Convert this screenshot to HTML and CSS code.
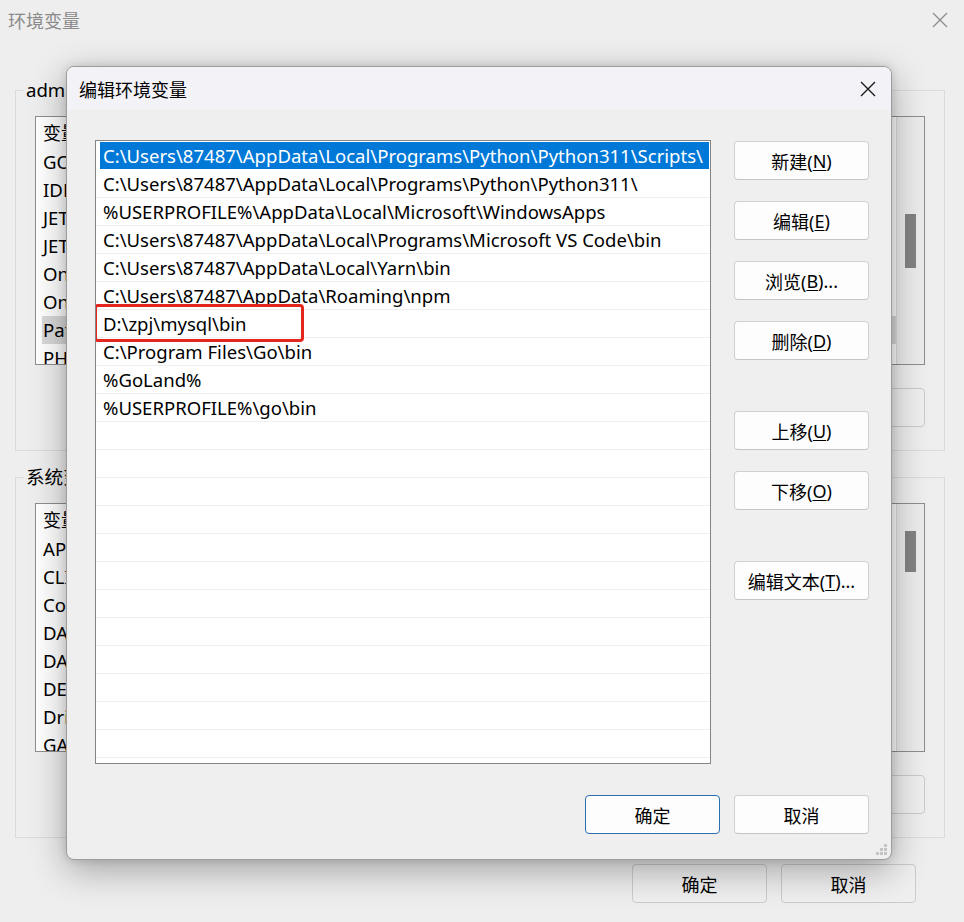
FILE: index.html
```html
<!DOCTYPE html>
<html lang="zh-CN">
<head>
<meta charset="utf-8">
<title>编辑环境变量</title>
<link rel="stylesheet" href="styles.css">
</head>
<body>
<div class="win">
  <div class="win-title">
    <span class="win-title-text">环境变量</span>
    <svg class="win-close" width="16" height="16" viewBox="0 0 16 16"><path d="M1 1L15 15M15 1L1 15" stroke="#8c8c8c" stroke-width="1.3" fill="none"/></svg>
  </div>

  <div class="group">
    <div class="group-label">admin 的用户变量(<u>U</u>)</div>
    <div class="bg-list">
      <div class="bg-list-body">
        <div class="bg-head">变量</div>
        <div class="bg-row">GOPATH</div>
        <div class="bg-row">IDEA_VM_OPTIONS</div>
        <div class="bg-row">JETBRAINSCLIENT_VM_OPTIONS</div>
        <div class="bg-row">JETBRAINS_CLIENT_VM_OPTIONS</div>
        <div class="bg-row">OneDrive</div>
        <div class="bg-row">OneDriveConsumer</div>
        <div class="bg-row bg-row-sel">Path</div>
        <div class="bg-row">PHPSTORM_VM_OPTIONS</div>
      </div>
      <div class="bg-scroll"><div class="bg-thumb thumb-1"></div></div>
    </div>
    <div class="group-actions"><div class="bg-btn">删除(<u>L</u>)</div></div>
  </div>

  <div class="group group-2">
    <div class="group-label">系统变量(<u>S</u>)</div>
    <div class="bg-list">
      <div class="bg-list-body">
        <div class="bg-head">变量</div>
        <div class="bg-row">APPDATA</div>
        <div class="bg-row">CLION_VM_OPTIONS</div>
        <div class="bg-row">ComSpec</div>
        <div class="bg-row">DATAGRIP_VM_OPTIONS</div>
        <div class="bg-row">DATASPELL_VM_OPTIONS</div>
        <div class="bg-row">DEVECOSTUDIO_VM_OPTIONS</div>
        <div class="bg-row">DriverData</div>
        <div class="bg-row">GATEWAY_VM_OPTIONS</div>
      </div>
      <div class="bg-scroll"><div class="bg-thumb thumb-2"></div></div>
    </div>
    <div class="group-actions"><div class="bg-btn">删除(<u>E</u>)</div></div>
  </div>

  <div class="win-footer">
    <div class="bg-btn">确定</div>
    <div class="bg-btn">取消</div>
  </div>

  <div class="dialog">
    <div class="dlg-title">
      <span class="dlg-title-text">编辑环境变量</span>
      <svg class="dlg-close" width="18" height="18" viewBox="0 0 18 18"><path d="M2 2L16 16M16 2L2 16" stroke="#1a1a1a" stroke-width="1.4" fill="none"/></svg>
    </div>
    <div class="dlg-body">
      <div class="dlg-main">
        <div class="path-list">
          <div class="row row-sel"><span>C:\Users\87487\AppData\Local\Programs\Python\Python311\Scripts\</span></div>
          <div class="row"><span>C:\Users\87487\AppData\Local\Programs\Python\Python311\</span></div>
          <div class="row"><span>%USERPROFILE%\AppData\Local\Microsoft\WindowsApps</span></div>
          <div class="row"><span>C:\Users\87487\AppData\Local\Programs\Microsoft VS Code\bin</span></div>
          <div class="row"><span>C:\Users\87487\AppData\Local\Yarn\bin</span></div>
          <div class="row"><span>C:\Users\87487\AppData\Roaming\npm</span></div>
          <div class="row"><span>D:\zpj\mysql\bin</span></div>
          <div class="row"><span>C:\Program Files\Go\bin</span></div>
          <div class="row"><span>%GoLand%</span></div>
          <div class="row"><span>%USERPROFILE%\go\bin</span></div>
          <div class="row"></div><div class="row"></div><div class="row"></div><div class="row"></div>
          <div class="row"></div><div class="row"></div><div class="row"></div><div class="row"></div>
          <div class="row"></div><div class="row"></div><div class="row"></div><div class="row"></div>
          <div class="mark"></div>
        </div>
        <div class="side-btns">
          <div class="btn">新建(<u>N</u>)</div>
          <div class="btn">编辑(<u>E</u>)</div>
          <div class="btn">浏览(<u>B</u>)...</div>
          <div class="btn">删除(<u>D</u>)</div>
          <div class="btn btn-sep">上移(<u>U</u>)</div>
          <div class="btn">下移(<u>O</u>)</div>
          <div class="btn btn-sep">编辑文本(<u>T</u>)...</div>
        </div>
      </div>
      <div class="dlg-footer">
        <div class="btn btn-default">确定</div>
        <div class="btn">取消</div>
      </div>
    </div>
    <svg class="grip" width="12" height="12" viewBox="0 0 12 12">
      <rect x="8" y="0" width="3" height="3" fill="#c4c4c4"/>
      <rect x="4" y="4" width="3" height="3" fill="#c4c4c4"/>
      <rect x="8" y="4" width="3" height="3" fill="#c4c4c4"/>
      <rect x="0" y="8" width="3" height="3" fill="#c4c4c4"/>
      <rect x="4" y="8" width="3" height="3" fill="#c4c4c4"/>
      <rect x="8" y="8" width="3" height="3" fill="#c4c4c4"/>
    </svg>
  </div>
</div>
</body>
</html>
```

FILE: styles.css
```css
* { box-sizing: border-box; }
html, body { margin: 0; padding: 0; }
body {
  width: 964px;
  height: 922px;
  overflow: hidden;
  background: #eeeeee;
  font-family: "Noto Sans", "Noto Sans CJK SC", sans-serif;
  font-size: 18px;
  color: #000;
}
u { text-decoration: underline; text-underline-offset: 2px; text-decoration-thickness: 1px; }

.win { position: relative; width: 964px; height: 922px; }
.win-title {
  height: 40px;
  display: flex;
  align-items: center;
  justify-content: space-between;
  padding: 0 16px 0 8px;
  color: #8a8a8a;
}
.win-title-text { font-family: "Noto Sans CJK SC", sans-serif; }

.group {
  margin: 50px 19px 0 15px;
  height: 361px;
  border: 1px solid #dadada;
  padding: 0 19px;
}
.group-2 { margin-top: 26px; }
.group-label {
  display: block;
  width: fit-content;
  height: 24px;
  line-height: 24px;
  margin: -13px 0 0 -11px;
  padding: 0 2px;
  background: #eeeeee;
  white-space: nowrap;
  font-size: 18.6px;
}
.bg-list {
  margin-top: 14px;
  height: 249px;
  border: 1px solid #8e8e8e;
  background: #fff;
  display: flex;
  overflow: hidden;
}
.bg-list-body { flex: 1; padding-left: 6px; font-size: 18.6px; }
.bg-head { height: 31px; line-height: 30px; padding-left: 1px; font-family: "Noto Sans CJK SC", sans-serif; font-size: 18px; }
.bg-row { height: 28px; line-height: 28px; padding-left: 1px; white-space: nowrap; }
.bg-row-sel { background: #d9d9d9; }
.bg-scroll {
  width: 28px;
  background: #ececec;
  border-left: 1px solid #dedede;
}
.bg-thumb { width: 11px; margin-left: 8px; background: #838383; }
.thumb-1 { margin-top: 97px; height: 54px; }
.thumb-2 { margin-top: 27px; height: 41px; }
.group-actions { display: flex; justify-content: flex-end; margin-top: 23px; }
.bg-btn {
  width: 135px;
  height: 39px;
  border: 1px solid #cbcbcb;
  border-radius: 4px;
  background: #efefef;
  display: flex;
  align-items: center;
  justify-content: center;
}
.win-footer {
  display: flex;
  justify-content: flex-end;
  gap: 14px;
  margin: 26px 48px 0 0;
}

/* dialog overlay */
.dialog {
  position: absolute;
  left: 66px;
  top: 66px;
  width: 826px;
  height: 794px;
  border: 1px solid #9c9c9c;
  border-radius: 8px;
  background: #efefef;
  box-shadow: 0 10px 36px rgba(0, 0, 0, 0.32), 0 0 10px rgba(0,0,0,0.12);
  overflow: hidden;
}
.dlg-title {
  height: 43px;
  background: #f3f3f7;
  display: flex;
  align-items: center;
  justify-content: space-between;
  padding: 0 14px 0 12px;
}
.dlg-title-text { font-family: "Noto Sans CJK SC", sans-serif; }
.dlg-body { padding: 30px 22px 0 28px; }
.dlg-main { display: flex; gap: 23px; }
.path-list {
  position: relative;
  width: 616px;
  height: 624px;
  border: 1px solid #848484;
  background: #fff;
  overflow: hidden;
  padding-top: 1px;
  font-size: 18.55px;
}
.row {
  height: 28px;
  border-bottom: 1px solid #efefef;
  padding-left: 7px;
  line-height: 27px;
  white-space: nowrap;
}
.row-sel {
  background: linear-gradient(to right, transparent 4px, #0078d7 4px, #0078d7 calc(100% - 1px), transparent calc(100% - 1px));
  color: #fff;
  border-bottom-color: #fff;
}
.mark {
  position: absolute;
  left: -2px;
  top: 163px;
  width: 210px;
  height: 38px;
  border: 3px solid #e5261f;
  border-radius: 4px;
}
.side-btns { display: flex; flex-direction: column; gap: 21px; padding-top: 1px; }
.btn {
  width: 135px;
  height: 39px;
  border: 1px solid #d0d0d0;
  border-bottom-color: #c4c4c4;
  border-radius: 4px;
  background: #fdfdfd;
  display: flex;
  align-items: center;
  justify-content: center;
  white-space: nowrap;
}
.btn-sep { margin-top: 30px; }
.btn-default { border: 1px solid #2a6fb0; }
.dlg-footer { display: flex; justify-content: flex-end; gap: 14px; margin-top: 31px; }
.grip { position: absolute; right: 3px; bottom: 3px; }
```
